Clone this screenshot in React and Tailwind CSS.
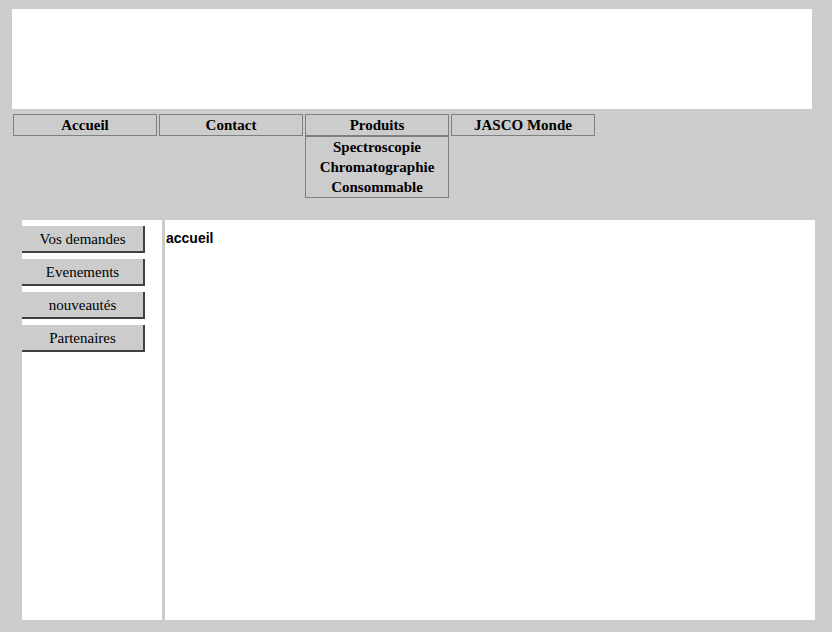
import React from 'react';

const navItems = ['Accueil', 'Contact', 'Produits', 'JASCO Monde'];
const produits = ['Spectroscopie', 'Chromatographie', 'Consommable'];
const sideLinks = ['Vos demandes', 'Evenements', 'nouveautés', 'Partenaires'];

export default function App() {
  return (
    <div className="w-[832px] h-[632px] bg-[#cccccc] pt-[9px] overflow-hidden" style={{ fontFamily: '"Liberation Serif", "Times New Roman", serif' }}>
      {/* header banner */}
      <div className="ml-[12px] w-[800px] h-[100px] bg-white"></div>

      {/* top menu */}
      <div className="mt-[5px] pl-[13px] flex items-start gap-[2px]">
        {navItems.map((item) => (
          <div key={item} className="w-[144px] flex flex-col">
            <div className="h-[22px] border border-[#808080] bg-[#cccccc] text-center font-bold text-[15px] leading-[20px] text-black">
              {item}
            </div>
            {item === 'Produits' && (
              <div className="h-[62px] border border-[#808080] bg-[#cccccc] text-center font-bold text-[15px] leading-[20px] text-black">
                {produits.map((p) => (
                  <div key={p}>{p}</div>
                ))}
              </div>
            )}
          </div>
        ))}
      </div>

      {/* main area */}
      <div className="mt-[22px] ml-[22px] w-[793px] h-[400px] flex">
        <div className="w-[140px] bg-white pt-[6px] flex flex-col gap-[6px]">
          {sideLinks.map((link) => (
            <div
              key={link}
              className="w-[123px] h-[27px] bg-[#cccccc] border-r-2 border-b-2 border-[#404040] text-center text-[15px] leading-[26px] text-black"
            >
              {link}
            </div>
          ))}
        </div>
        <div className="w-[3px] bg-[#cccccc]"></div>
        <div className="flex-1 bg-white pt-[10px] pl-[1px]">
          <div className="font-bold text-[14px] leading-[16px] text-black" style={{ fontFamily: '"Liberation Sans", Arial, sans-serif' }}>
            accueil
          </div>
        </div>
      </div>
    </div>
  );
}
